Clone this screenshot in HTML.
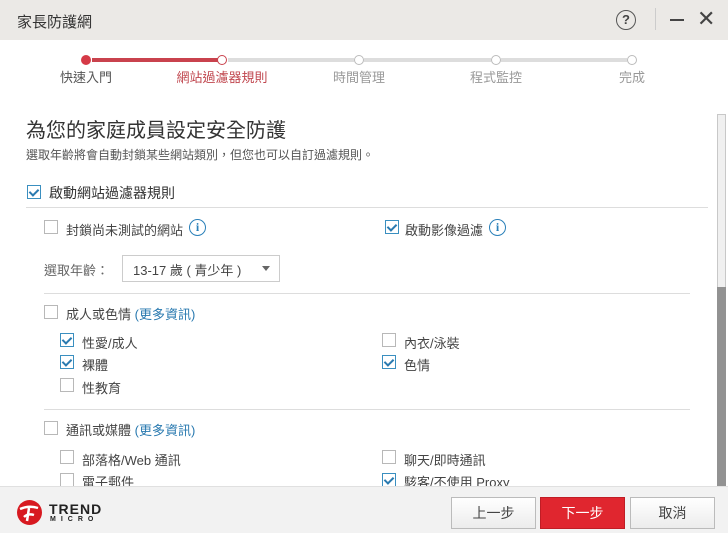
<!DOCTYPE html>
<html><head><meta charset="utf-8"><style>
*{margin:0;padding:0;box-sizing:border-box}
body{width:728px;height:533px;overflow:hidden;background:#fff;font-family:"Liberation Sans","Noto Sans CJK TC",sans-serif;position:relative;color:#333}
.a{position:absolute;white-space:nowrap}
.cb{position:absolute;width:14px;height:14px;border:1px solid #b8b8b8;background:#fff}
.cb.on{border-color:#3a8fc0}
.cb.on::after{content:"";position:absolute;left:3px;top:1px;width:4px;height:7px;border:solid #2a7ab0;border-width:0 2px 2px 0;transform:rotate(45deg)}
.t{font-size:13px;color:#444}
.hl{position:absolute;height:1px;background:#ddd}
.info{position:absolute;width:17px;height:17px;border:1.5px solid #2a80b9;border-radius:50%;color:#2a80b9;font:bold 12px "Liberation Serif",serif;text-align:center;line-height:14px}
.dot{position:absolute;width:10px;height:10px;border-radius:50%;border:1.5px solid #bbb;background:#fff;top:55px}
.pl{position:absolute;height:4px;top:58px;background:#ddd}
.lab{position:absolute;top:67px;font-size:13px;color:#999;transform:translateX(-50%)}
.btn{position:absolute;top:497px;height:32px;width:85px;border:1px solid #bbb;background:linear-gradient(#fff,#ececec);font-size:14px;color:#444;text-align:center;line-height:30px}
a{color:#2a7ab0}
</style></head><body>
<div class="a" style="left:0;top:0;width:728px;height:40px;background:#ebe9e6"></div>
<div class="a" style="left:17px;top:11px;font-size:15px;color:#333">家長防護網</div>
<div class="a" style="left:616px;top:10px;width:20px;height:20px;border:1.5px solid #555;border-radius:50%;text-align:center;font-size:13px;line-height:17px;color:#444;font-weight:bold">?</div>
<div class="a" style="left:655px;top:8px;width:1px;height:22px;background:#ccc"></div>
<div class="a" style="left:670px;top:19px;width:14px;height:2px;background:#444"></div>
<div class="a" style="left:697px;top:7px;font-size:22px;color:#444;line-height:24px">✕</div>

<div class="pl" style="left:92px;width:126px;background:#c9424d"></div>
<div class="pl" style="left:228px;width:126px"></div>
<div class="pl" style="left:364px;width:127px"></div>
<div class="pl" style="left:501px;width:126px"></div>
<div class="dot" style="left:81px;background:#d53a47;border-color:#d53a47"></div>
<div class="dot" style="left:217px;border-color:#c9424d"></div>
<div class="dot" style="left:354px"></div>
<div class="dot" style="left:491px"></div>
<div class="dot" style="left:627px"></div>
<div class="lab" style="left:86px;color:#555">快速入門</div>
<div class="lab" style="left:222px;color:#c0464e">網站過濾器規則</div>
<div class="lab" style="left:359px">時間管理</div>
<div class="lab" style="left:496px">程式監控</div>
<div class="lab" style="left:632px">完成</div>

<div class="a" style="left:26px;top:114px;font-size:20px;color:#333">為您的家庭成員設定安全防護</div>
<div class="a" style="left:26px;top:146px;font-size:12px;color:#555">選取年齡將會自動封鎖某些網站類別，但您也可以自訂過濾規則。</div>

<div class="cb on" style="left:27px;top:185px"></div>
<div class="a" style="left:49px;top:183px;font-size:14px;color:#333">啟動網站過濾器規則</div>
<div class="hl" style="left:26px;top:207px;width:682px"></div>

<div class="cb" style="left:44px;top:220px"></div>
<div class="a t" style="left:66px;top:220px">封鎖尚未測試的網站</div>
<div class="info" style="left:189px;top:219px">i</div>
<div class="cb on" style="left:385px;top:220px"></div>
<div class="a t" style="left:405px;top:220px">啟動影像過濾</div>
<div class="info" style="left:489px;top:219px">i</div>

<div class="a t" style="left:44px;top:260px;color:#666">選取年齡：</div>
<div class="a" style="left:122px;top:255px;width:158px;height:27px;border:1px solid #ccc"></div>
<div class="a t" style="left:133px;top:260px">13-17 歲 ( 青少年 )</div>
<div class="a" style="left:262px;top:266px;border:4px solid transparent;border-top:5px solid #666"></div>
<div class="hl" style="left:44px;top:293px;width:646px"></div>

<div class="cb" style="left:44px;top:305px"></div>
<div class="a t" style="left:66px;top:304px">成人或色情 <a>(更多資訊)</a></div>
<div class="cb on" style="left:60px;top:333px"></div><div class="a t" style="left:82px;top:333px">性愛/成人</div>
<div class="cb on" style="left:60px;top:355px"></div><div class="a t" style="left:82px;top:355px">裸體</div>
<div class="cb" style="left:60px;top:378px"></div><div class="a t" style="left:82px;top:378px">性教育</div>
<div class="cb" style="left:382px;top:333px"></div><div class="a t" style="left:404px;top:333px">內衣/泳裝</div>
<div class="cb on" style="left:382px;top:355px"></div><div class="a t" style="left:404px;top:355px">色情</div>
<div class="hl" style="left:44px;top:409px;width:646px"></div>

<div class="cb" style="left:44px;top:421px"></div>
<div class="a t" style="left:66px;top:420px">通訊或媒體 <a>(更多資訊)</a></div>
<div class="cb" style="left:60px;top:450px"></div><div class="a t" style="left:82px;top:450px">部落格/Web 通訊</div>
<div class="cb" style="left:60px;top:473px"></div><div class="a t" style="left:82px;top:472px">電子郵件</div>
<div class="cb" style="left:382px;top:450px"></div><div class="a t" style="left:404px;top:450px">聊天/即時通訊</div>
<div class="cb on" style="left:382px;top:473px"></div><div class="a t" style="left:404px;top:472px">駭客/不使用 Proxy</div>

<div class="a" style="left:717px;top:114px;width:9px;height:372px;background:#f0f0f0;border:1px solid #c8c8c8"></div>
<div class="a" style="left:717px;top:287px;width:9px;height:199px;background:#929292"></div>

<div class="a" style="left:0;top:486px;width:728px;height:47px;background:#f2f2f2;border-top:1px solid #e0e0e0"></div>
<svg class="a" style="left:16px;top:499px" width="27" height="27" viewBox="0 0 27 27"><circle cx="13.5" cy="13.5" r="12.5" fill="#d71920"/><path d="M4 10 Q13 6 22 9 M13 9 L11 22 M8 18 Q12 14 18 16" stroke="#fff" stroke-width="2.5" fill="none"/></svg>
<div class="a" style="left:49px;top:501px;font:bold 14px 'Liberation Sans',sans-serif;color:#222;letter-spacing:1px">TREND</div>
<div class="a" style="left:50px;top:516px;font:bold 7px 'Liberation Sans',sans-serif;color:#222;letter-spacing:5px">MICRO</div>
<div class="btn" style="left:451px">上一步</div>
<div class="btn" style="left:540px;background:#e0262f;border-color:#c01d25;color:#fff">下一步</div>
<div class="btn" style="left:630px">取消</div>
</body></html>
